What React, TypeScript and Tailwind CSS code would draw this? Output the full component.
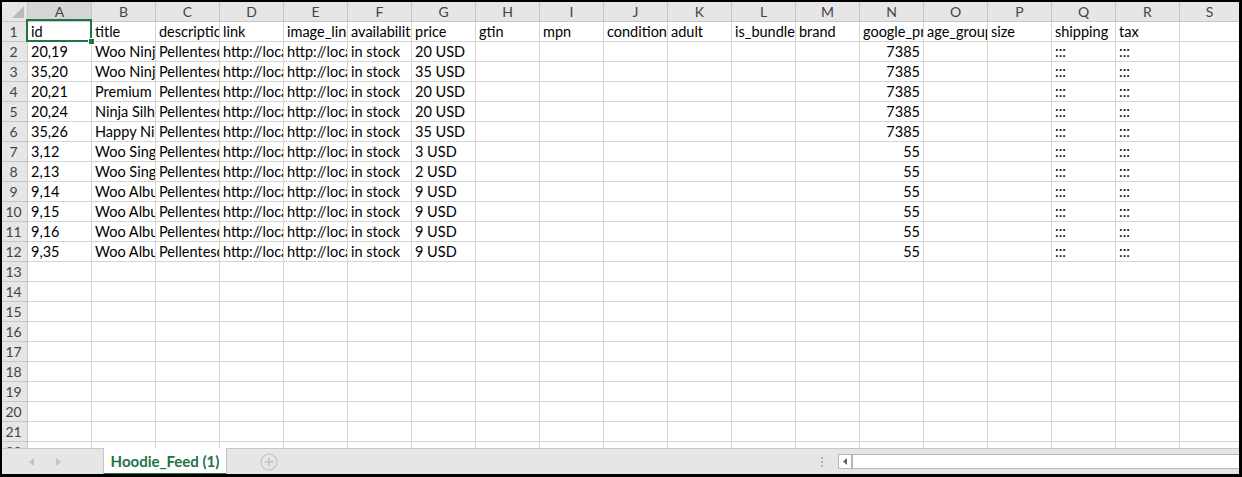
import React from "react";

const COLS = ["A", "B", "C", "D", "E", "F", "G", "H", "I", "J", "K", "L", "M", "N", "O", "P", "Q", "R", "S"];

type Cell = string | { v: string; right?: boolean };

const HEAD: Cell[] = [
  "id", "title", "description", "link", "image_link", "availability", "price", "gtin", "mpn",
  "condition", "adult", "is_bundle", "brand", "google_product_category", "age_group", "size",
  "shipping", "tax", "",
];

const ROWS: [string, string, string, string, number][] = [
  ["20,19", "Woo Ninja", "in stock", "20 USD", 7385],
  ["35,20", "Woo Ninja", "in stock", "35 USD", 7385],
  ["20,21", "Premium Quality", "in stock", "20 USD", 7385],
  ["20,24", "Ninja Silhouette", "in stock", "20 USD", 7385],
  ["35,26", "Happy Ninja", "in stock", "35 USD", 7385],
  ["3,12", "Woo Single #1", "in stock", "3 USD", 55],
  ["2,13", "Woo Single #2", "in stock", "2 USD", 55],
  ["9,14", "Woo Album #1", "in stock", "9 USD", 55],
  ["9,15", "Woo Album #2", "in stock", "9 USD", 55],
  ["9,16", "Woo Album #3", "in stock", "9 USD", 55],
  ["9,35", "Woo Album #4", "in stock", "9 USD", 55],
];

function buildRow(r: (typeof ROWS)[number]): Cell[] {
  const [id, title, avail, price, cat] = r;
  return [
    id, title, "Pellentesque habitant morbi", "http://localhost/product", "http://localhost/image.jpg",
    avail, price, "", "", "", "", "", "", { v: String(cat), right: true }, "", "", ":::", ":::", "",
  ];
}

const font = { fontFamily: "Lato, 'Liberation Sans', sans-serif" };

function RowHead({ n }: { n: number | string }) {
  return (
    <div className="flex h-full w-[26px] shrink-0 items-center justify-center border-r border-b border-[#c6c6c6] bg-[#e6e6e6] pr-[2px] text-[14px] text-[#444]">
      {n}
    </div>
  );
}

function GridRow({ n, cells, active }: { n: number; cells: Cell[]; active?: number }) {
  return (
    <div className="flex h-[20px] shrink-0">
      <RowHead n={n} />
      {COLS.map((c, i) => {
        const cell = cells[i] ?? "";
        const v = typeof cell === "string" ? cell : cell.v;
        const right = typeof cell !== "string" && cell.right;
        return (
          <div
            key={c}
            className={`relative h-full shrink-0 whitespace-nowrap border-r border-b border-[#d4d4d4] text-[14.5px] leading-[20px] text-black ${
              i === COLS.length - 1 ? "w-[60px]" : "w-[64px]"
            } ${right ? "text-right" : "text-left"}`}
          >
            <div className="h-full overflow-hidden px-[3px]">{v}</div>
            {active === i && (
              <>
                {/* selection frame + fill handle */}
                <div className="pointer-events-none absolute -top-[3px] -left-[2px] z-10 h-[23px] w-[66px] border-2 border-[#217346]" />
                <div className="pointer-events-none absolute top-[16px] left-[60px] z-10 h-[7px] w-[7px] border border-white bg-[#217346]" />
              </>
            )}
          </div>
        );
      })}
    </div>
  );
}

export default function App() {
  const blank = COLS.map(() => "");
  return (
    <div className="h-[477px] w-[1242px] overflow-hidden bg-black pt-[2px] pl-[2px] pr-[3px] pb-[3px]" style={font}>
      <div className="flex h-full w-full flex-col overflow-hidden bg-white">
        {/* column letters */}
        <div className="flex h-[20px] shrink-0">
          <div className="relative h-full w-[26px] shrink-0 border-r border-b border-[#c6c6c6] bg-[#e6e6e6]">
            <svg className="absolute right-[3px] bottom-[3px]" width="12" height="12" viewBox="0 0 12 12">
              <polygon points="12,0 12,12 0,12" fill="#b9b9b9" />
            </svg>
          </div>
          {COLS.map((c, i) => (
            <div
              key={c}
              className={`flex h-full shrink-0 items-center justify-center border-r border-b border-[#c6c6c6] text-[14px] text-[#444] ${
                i === COLS.length - 1 ? "w-[60px]" : "w-[64px]"
              } ${i === 0 ? "bg-[#d6d6d6]" : "bg-[#e6e6e6]"}`}
            >
              {c}
            </div>
          ))}
        </div>

        <GridRow n={1} cells={HEAD} active={0} />
        {ROWS.map((r, i) => (
          <GridRow key={i} n={i + 2} cells={buildRow(r)} />
        ))}
        {Array.from({ length: 9 }, (_, i) => (
          <GridRow key={`b${i}`} n={i + 13} cells={blank} />
        ))}
        <div className="h-[6px] shrink-0 overflow-hidden">
          <GridRow n={22} cells={blank} />
        </div>

        {/* sheet tabs + horizontal scrollbar */}
        <div className="flex h-[26px] shrink-0 items-stretch border-t border-[#c6c6c6] bg-[#e6e6e6]">
          <div className="flex w-[101px] shrink-0 items-center gap-[22px] pl-[27px]">
            <svg width="5" height="8" viewBox="0 0 5 8">
              <polygon points="5,0 5,8 0,4" fill="#c3c3c3" />
            </svg>
            <svg width="5" height="8" viewBox="0 0 5 8">
              <polygon points="0,0 0,8 5,4" fill="#c3c3c3" />
            </svg>
          </div>
          <div className="-mt-px flex w-[124px] shrink-0 flex-col border-x border-[#c6c6c6] bg-white">
            <div className="flex flex-1 items-center justify-center pt-[2px] text-[15px] font-bold text-[#217346]">
              Hoodie_Feed (1)
            </div>
            <div className="h-[3px] bg-[#217346]" />
          </div>
          <div className="flex w-[82px] shrink-0 items-center justify-center pl-[2px]">
            <svg width="18" height="18" viewBox="0 0 18 18">
              <circle cx="9" cy="9" r="8" fill="none" stroke="#c3c3c3" strokeWidth="1.2" />
              <path d="M9 4.5v9M4.5 9h9" stroke="#c3c3c3" strokeWidth="1.6" />
            </svg>
          </div>
          <div className="flex-1" />
          <div className="flex w-[16px] shrink-0 flex-col items-center justify-center gap-[2px]">
            <div className="h-[2px] w-[2px] bg-[#b0b0b0]" />
            <div className="h-[2px] w-[2px] bg-[#b0b0b0]" />
            <div className="h-[2px] w-[2px] bg-[#b0b0b0]" />
          </div>
          <div className="flex w-[409px] shrink-0 items-center pl-[8px]">
            <div className="flex h-[15px] flex-1 border border-r-0 border-[#b6b6b6] bg-white">
              <div className="flex w-[14px] items-center justify-center border-r-2 border-[#b6b6b6]">
                <svg width="4" height="7" viewBox="0 0 4 7">
                  <polygon points="4,0 4,7 0,3.5" fill="#606060" />
                </svg>
              </div>
            </div>
          </div>
        </div>
      </div>
    </div>
  );
}
